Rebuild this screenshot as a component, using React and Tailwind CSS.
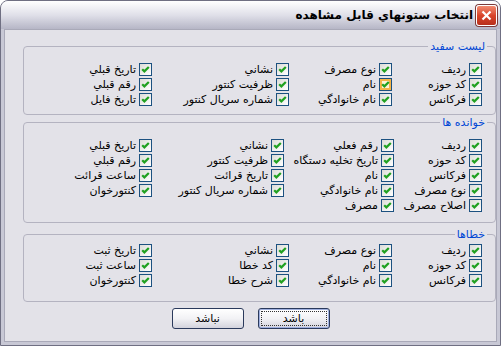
import React from 'react';

const G1 = [
  [{ t: 'رديف' }, { t: 'كد حوزه' }, { t: 'فركانس' }],
  [{ t: 'نوع مصرف' }, { t: 'نام', hot: true }, { t: 'نام خانوادگي' }],
  [{ t: 'نشاني' }, { t: 'ظرفيت كنتور' }, { t: 'شماره سريال كنتور' }],
  [{ t: 'تاريخ قبلي' }, { t: 'رقم قبلي' }, { t: 'تاريخ فايل' }],
];

const G2 = [
  [{ t: 'رديف' }, { t: 'كد حوزه' }, { t: 'فركانس' }, { t: 'نوع مصرف' }, { t: 'اصلاح مصرف' }],
  [{ t: 'رقم فعلي' }, { t: 'تاريخ تخليه دستگاه' }, { t: 'نام' }, { t: 'نام خانوادگي' }, { t: 'مصرف' }],
  [{ t: 'نشاني' }, { t: 'ظرفيت كنتور' }, { t: 'تاريخ قرائت' }, { t: 'شماره سريال كنتور' }],
  [{ t: 'تاريخ قبلي' }, { t: 'رقم قبلي' }, { t: 'ساعت قرائت' }, { t: 'كنتورخوان' }],
];

const G3 = [
  [{ t: 'رديف' }, { t: 'كد حوزه' }, { t: 'فركانس' }],
  [{ t: 'نوع مصرف' }, { t: 'نام' }, { t: 'نام خانوادگي' }],
  [{ t: 'نشاني' }, { t: 'كد خطا' }, { t: 'شرح خطا' }],
  [{ t: 'تاريخ ثبت' }, { t: 'ساعت ثبت' }, { t: 'كنتورخوان' }],
];

function Box({ hot }) {
  return (
    <span
      className={[
        "w-[13px] h-[13px] shrink-0 border border-[#1c5180] flex items-center justify-center",
        hot
          ? "bg-[#fdf3d6] shadow-[inset_0_0_0_2px_#f6b548]"
          : "bg-linear-to-br from-[#dcdcd7] to-white",
      ].join(" ")}
    >
      <svg width="9" height="9" viewBox="0 0 9 9">
        <polyline points="1.2,4.2 3.4,6.4 7.8,2" fill="none" stroke="#21a121" strokeWidth="2.2" />
      </svg>
    </span>
  );
}

function Item({ t, hot }) {
  return (
    <div className="h-[15px] flex items-center gap-[3px] whitespace-nowrap">
      <Box hot={hot} />
      <span className="leading-[13px]">{t}</span>
    </div>
  );
}

function Group({ title, cols, widths, className, bodyCls }) {
  return (
    <fieldset className={"ml-[11px] w-[473px] border border-[#b4b3c0] rounded-[4px] " + className}>
      <legend className="mr-[8px] px-[2px] text-[#0046d5] leading-[13px]">{title}</legend>
      <div className={"flex pr-[13px] " + bodyCls}>
        {cols.map((col, i) => (
          <div key={i} className={widths[i]}>
            {col.map((it, j) => <Item key={j} {...it} />)}
          </div>
        ))}
      </div>
    </fieldset>
  );
}

function Btn({ label, isDefault }) {
  return (
    <button
      className={[
        "w-[72px] h-[21px] rounded-[3px] border border-[#2b3a5c] flex p-[2px]",
        "bg-linear-to-b from-white via-[#f2f2f5] to-[#d3d3dd]",
        isDefault ? "shadow-[inset_0_0_0_1px_#9fb0e0]" : "",
      ].join(" ")}
    >
      <span
        className={[
          "flex-1 flex items-center justify-center leading-[13px] text-[11px]",
          isDefault ? "border border-dotted border-[#333]" : "",
        ].join(" ")}
      >
        {label}
      </span>
    </button>
  );
}

export default function App() {
  return (
    <div
      dir="rtl"
      className="w-[501px] h-[346px] border border-[#6f6f82] rounded-t-[8px] bg-[#c8c8d5] overflow-hidden flex flex-col text-[11px] text-black"
      style={{ fontFamily: '"DejaVu Sans", Tahoma, sans-serif' }}
    >
      {/* Title bar */}
      <div className="h-[28px] shrink-0 flex items-center bg-linear-to-b from-white via-[#e0e0e9] to-[#b6b6c6]">
        <div className="mr-[3px] w-[21px] h-[21px] rounded-[3px] border border-white bg-linear-to-b from-[#f08a70] via-[#d9442a] to-[#b8301c] shadow-[0_0_0_1px_#7a3a3a] flex items-center justify-center">
          <svg width="11" height="11" viewBox="0 0 11 11">
            <path d="M1.5 1.5 L9.5 9.5 M9.5 1.5 L1.5 9.5" stroke="white" strokeWidth="2.2" />
          </svg>
        </div>
        <div className="mr-[3px] font-bold text-[12px] leading-[16px]">انتخاب ستونهاي قابل مشاهده</div>
      </div>

      {/* Client area */}
      <div className="mx-[3px] mb-[3px] flex-1 bg-[#e3e2e8] border border-[#a9a9b8] flex flex-col">
        <Group
          title="ليست سفيد"
          cols={G1}
          widths={["w-[90px]", "w-[103px]", "w-[137px]", "flex-1"]}
          className="mt-[10px]"
          bodyCls="pt-[9px] pb-[7px]"
        />
        <Group
          title="خوانده ها"
          cols={G2}
          widths={["w-[88px]", "w-[110px]", "w-[132px]", "flex-1"]}
          className="mt-[1px]"
          bodyCls="pt-[9px] pb-[9px]"
        />
        <Group
          title="خطاها"
          cols={G3}
          widths={["w-[90px]", "w-[103px]", "w-[137px]", "flex-1"]}
          className="mt-[5px]"
          bodyCls="pt-[2px] pb-[13px]"
        />
        <div className="mt-[6px] flex justify-center gap-[14px]">
          <Btn label="باشد" isDefault />
          <Btn label="نباشد" />
        </div>
      </div>
    </div>
  );
}
